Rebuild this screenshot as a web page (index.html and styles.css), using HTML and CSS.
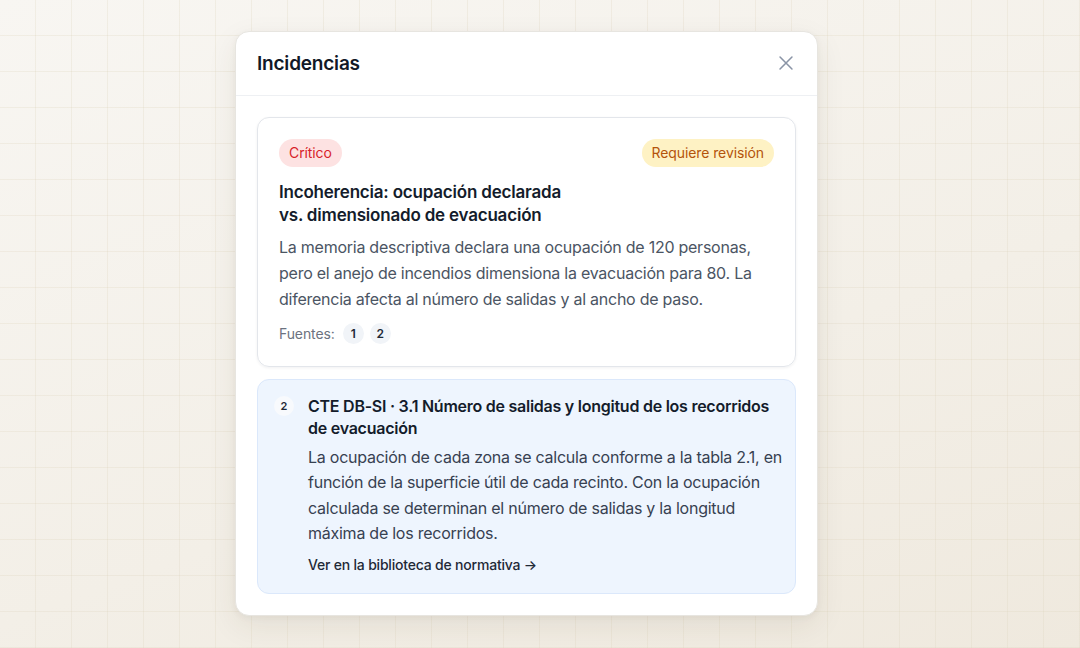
FILE: index.html
```html
<!DOCTYPE html>
<html lang="es">
  <head>
    <meta charset="UTF-8" />
    <meta name="viewport" content="width=device-width, initial-scale=1.0" />
    <title>Incidencias</title>
    <link rel="stylesheet" href="styles.css">
  </head>
  <body>
    <div class="backdrop">
      <div class="modal" role="dialog" aria-labelledby="modal-title" aria-modal="true">
        <div class="modal-header">
          <h2 id="modal-title">Incidencias</h2>
          <button class="close-button" aria-label="Cerrar">
            <svg width="22" height="22" viewBox="0 0 24 24" fill="none" stroke="currentColor" stroke-width="1.7" stroke-linecap="round" aria-hidden="true">
              <path d="M5.5 5.5l13 13M18.5 5.5l-13 13" />
            </svg>
          </button>
        </div>

        <div class="modal-body">
          <div class="issue-card">
            <div class="issue-tags">
              <span class="tag tag-critical">Crítico</span>
              <span class="tag tag-review">Requiere revisión</span>
            </div>
            <h3 class="issue-title">Incoherencia: ocupación declarada vs. dimensionado de evacuación</h3>
            <p class="issue-text">
              La memoria descriptiva declara una ocupación de 120 personas,
              pero el anejo de incendios dimensiona la evacuación para 80. La
              diferencia afecta al número de salidas y al ancho de paso.
            </p>
            <div class="sources">
              <span>Fuentes:</span>
              <button class="source-pill">1</button>
              <button class="source-pill">2</button>
            </div>
          </div>

          <div class="source-card">
            <span class="source-number">2</span>
            <div class="source-content">
              <h4 class="source-title">CTE DB-SI · 3.1 Número de salidas y longitud de los recorridos de evacuación</h4>
              <p class="source-text">
                La ocupación de cada zona se calcula conforme a la tabla 2.1, en
                función de la superficie útil de cada recinto. Con la ocupación
                calculada se determinan el número de salidas y la longitud
                máxima de los recorridos.
              </p>
              <a class="source-link" href="#">Ver en la biblioteca de normativa →</a>
            </div>
          </div>
        </div>
      </div>
    </div>
  </body>
</html>
```

FILE: styles.css
```css
* {
  box-sizing: border-box;
}

html,
body {
  margin: 0;
  height: 100%;
}

body {
  font-family: Inter, "Noto Sans", sans-serif;
  color: #111827;
  background-color: #f5f2ec;
  background-image:
    linear-gradient(rgba(222, 212, 190, 0.28) 1px, transparent 1px),
    linear-gradient(90deg, rgba(222, 212, 190, 0.28) 1px, transparent 1px),
    linear-gradient(160deg, #f8f6f2 0%, #f3efe7 60%, #efe9de 100%);
  background-size: 36px 36px, 36px 36px, 100% 100%;
  background-position: -1px -1px, -1px -1px, 0 0;
}

.backdrop {
  height: 100%;
  padding: 0 27px 1px 0;
  display: flex;
  align-items: center;
  justify-content: center;
}

/* Dialog */
.modal {
  width: 583px;
  background: #fff;
  border: 1px solid #e7e5e0;
  border-radius: 14px;
  box-shadow: 0 10px 30px rgba(60, 50, 30, 0.08), 0 2px 6px rgba(60, 50, 30, 0.05);
}

.modal-header {
  height: 64px;
  padding: 0 21px;
  display: flex;
  align-items: center;
  justify-content: space-between;
  border-bottom: 1px solid #eef0f3;
}

.modal-header h2 {
  margin: 0;
  font-size: 19px;
  font-weight: 600;
  letter-spacing: -0.2px;
  color: #111827;
}

.close-button {
  background: none;
  border: none;
  padding: 0;
  margin-right: -1px;
  color: #8a94a6;
  cursor: pointer;
  display: flex;
}

.modal-body {
  padding: 21px;
  display: flex;
  flex-direction: column;
  gap: 12px;
}

/* Issue card */
.issue-card {
  border: 1px solid #e3e6eb;
  border-radius: 12px;
  padding: 21px 21px 22px;
  box-shadow: 0 1px 3px rgba(16, 24, 40, 0.06);
}

.issue-tags {
  display: flex;
  justify-content: space-between;
}

.tag {
  height: 28px;
  padding: 0 10px;
  border-radius: 14px;
  font-size: 14px;
  line-height: 28px;
  letter-spacing: -0.1px;
}

.tag-critical {
  background: #fde2e2;
  color: #d81f2a;
}

.tag-review {
  background: #fef2c4;
  color: #b4540b;
}

.issue-title {
  margin: 14px 0 0;
  max-width: 300px;
  font-size: 17px;
  font-weight: 600;
  line-height: 23px;
  letter-spacing: -0.2px;
  color: #141c2b;
}

.issue-text {
  margin: 7px 0 0;
  font-size: 16px;
  line-height: 26px;
  letter-spacing: -0.25px;
  color: #4b5563;
}

.sources {
  margin-top: 11px;
  display: flex;
  align-items: center;
  gap: 6px;
  font-size: 14px;
  letter-spacing: -0.1px;
  color: #6b7280;
}

.sources span {
  margin-right: 2px;
}

.source-pill {
  width: 21px;
  height: 21px;
  border: none;
  border-radius: 50%;
  padding: 0;
  background: #f1f4f8;
  color: #1f2937;
  font-family: inherit;
  font-size: 12px;
  font-weight: 600;
  cursor: pointer;
}

/* Regulation excerpt */
.source-card {
  display: flex;
  gap: 14px;
  padding: 15px 12px 18px 16px;
  background: #eef5fe;
  border: 1px solid #dbe8fb;
  border-radius: 12px;
}

.source-number {
  flex: none;
  width: 20px;
  height: 20px;
  margin-top: 1px;
  border-radius: 50%;
  background: #f8fafd;
  font-size: 11px;
  font-weight: 600;
  line-height: 20px;
  text-align: center;
  color: #1f2937;
}

.source-title {
  margin: 0;
  font-size: 16px;
  font-weight: 600;
  line-height: 22px;
  letter-spacing: -0.25px;
  color: #141c2b;
}

.source-text {
  margin: 6px 0 0;
  font-size: 16px;
  line-height: 25.3px;
  letter-spacing: -0.25px;
  color: #374151;
}

.source-link {
  display: inline-block;
  margin-top: 9px;
  font-size: 14px;
  font-weight: 500;
  line-height: 20px;
  letter-spacing: -0.2px;
  color: #1f2937;
  text-decoration: none;
}
```
